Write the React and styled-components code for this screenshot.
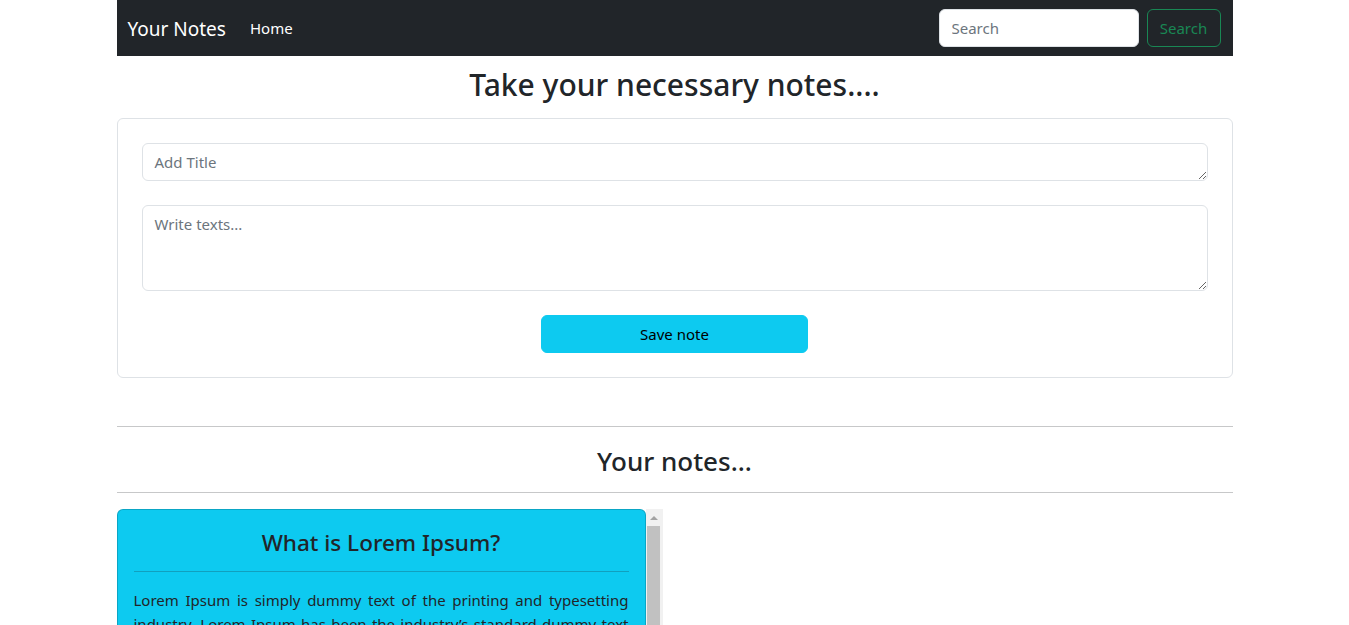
import React from 'react';
import styled, { createGlobalStyle } from 'styled-components';

const Global = createGlobalStyle`
  *, *::before, *::after { box-sizing: border-box; }
  html, body { margin: 0; padding: 0; overflow: hidden; background: #fff; }
  body {
    font-family: "Noto Sans", "Open Sans", sans-serif;
    font-size: 15px;
    line-height: 24px;
    color: #212529;
  }
`;

const Container = styled.div`
  width: 1116px;
  margin: 0 auto;
`;

const Navbar = styled.nav`
  height: 56px;
  background: #212529;
  display: flex;
  align-items: center;
  padding: 0 12px 0 11px;
`;

const Brand = styled.a`
  font-size: 19px;
  line-height: 30px;
  margin-top: 2px;
  color: #fff;
  text-decoration: none;
  margin-right: 24px;
`;

const NavLink = styled.a`
  font-size: 15px;
  line-height: 24px;
  color: #fff;
  text-decoration: none;
`;

const SearchForm = styled.form`
  margin: 0 0 0 auto;
  display: flex;
  gap: 8px;
`;

const SearchInput = styled.input`
  width: 200px;
  height: 38px;
  padding: 6px 12px;
  border: 1px solid #dee2e6;
  border-radius: 6px;
  font: inherit;
  color: #212529;
  background: #fff;
  &::placeholder { color: #6c757d; }
`;

const OutlineButton = styled.button`
  width: 74px;
  height: 38px;
  padding: 0;
  border: 1px solid #198754;
  border-radius: 6px;
  background: transparent;
  color: #198754;
  font: inherit;
`;

const PageTitle = styled.h2`
  margin: 10px 0 14px;
  font-size: 30px;
  font-weight: 500;
  line-height: 38px;
  text-align: center;
`;

const FormCard = styled.div`
  border: 1px solid #dee2e6;
  border-radius: 6px;
  padding: 24px;
  display: flex;
  flex-direction: column;
  gap: 24px;
`;

const Field = styled.textarea`
  display: block;
  width: 100%;
  height: ${p => p.$h}px;
  padding: 6px 12px;
  border: 1px solid #dee2e6;
  border-radius: 6px;
  font: inherit;
  color: #212529;
  &::placeholder { color: #6c757d; }
`;

const SaveButton = styled.button`
  align-self: center;
  width: 25%;
  height: 38px;
  background: #0dcaf0;
  border: 1px solid #0dcaf0;
  border-radius: 6px;
  color: #000;
  font: inherit;
`;

const Rule = styled.hr`
  margin: ${p => p.$m};
  border: 0;
  border-top: 1px solid rgba(33, 37, 41, 0.25);
`;

const SectionTitle = styled.h3`
  margin: 0;
  font-size: 26px;
  font-weight: 500;
  line-height: 32px;
  padding-bottom: 2px;
  text-align: center;
`;

const NotesGrid = styled.div`
  display: grid;
  grid-template-columns: 546px 546px;
  column-gap: 24px;
`;

const NoteColumn = styled.div`
  height: 340px;
  display: flex;
  align-items: flex-start;
  overflow: hidden;
`;

const NoteCard = styled.div`
  flex: 1;
  background: #0dcaf0;
  border: 1px solid rgba(0, 0, 0, 0.175);
  border-radius: 6px;
  padding: 16px;
`;

const ScrollTrack = styled.div`
  flex: 0 0 17px;
  align-self: stretch;
  background: #f1f1f1;
  display: flex;
  flex-direction: column;
`;

const ScrollArrow = styled.div`
  height: 17px;
  display: flex;
  align-items: center;
  justify-content: center;
  &::before {
    content: "";
    width: 0;
    height: 0;
    border-left: 4px solid transparent;
    border-right: 4px solid transparent;
    border-bottom: 4px solid #a3a3a3;
    margin-right: 1px;
  }
`;

const ScrollThumb = styled.div`
  height: ${p => p.$h}px;
  margin: 0 3px 0 1px;
  background: #c1c1c1;
`;

const NoteTitle = styled.h4`
  margin: 0 0 12px;
  font-size: 22.5px;
  font-weight: 500;
  line-height: 33px;
  text-align: center;
`;

const NoteText = styled.p`
  margin: 0;
  text-align: justify;
`;

const notes = [
  {
    title: 'What is Lorem Ipsum?',
    text: 'Lorem Ipsum is simply dummy text of the printing and typesetting industry. Lorem Ipsum has been the industry’s standard dummy text ever since the 1500s, when an unknown printer took a galley of type and scrambled it to make a type specimen book. It has survived not only five centuries, but also the leap into electronic typesetting, remaining essentially unchanged. It was popularised in the 1960s with the release of Letraset sheets containing Lorem Ipsum passages, and more recently with desktop publishing software like Aldus PageMaker including versions of Lorem Ipsum.',
  },
];

export default function App() {
  return (
    <>
      <Global />
      <Container>
        <Navbar>
          <Brand href="#">Your Notes</Brand>
          <NavLink href="#">Home</NavLink>
          <SearchForm onSubmit={e => e.preventDefault()}>
            <SearchInput type="search" placeholder="Search" />
            <OutlineButton type="submit">Search</OutlineButton>
          </SearchForm>
        </Navbar>

        <PageTitle>Take your necessary notes....</PageTitle>

        <FormCard>
          <Field $h={38} rows={1} placeholder="Add Title" />
          <Field $h={86} rows={3} placeholder="Write texts..." />
          <SaveButton type="button">Save note</SaveButton>
        </FormCard>

        <Rule $m="48px 0 18px" />
        <SectionTitle>Your notes...</SectionTitle>
        <Rule $m="13px 0 16px" />

        <NotesGrid>
          {notes.map(n => (
            <NoteColumn key={n.title}>
              <NoteCard>
                <NoteTitle>{n.title}</NoteTitle>
                <Rule $m="0 0 16px" />
                <NoteText>{n.text}</NoteText>
              </NoteCard>
              <ScrollTrack aria-hidden="true">
                <ScrollArrow />
                <ScrollThumb $h={260} />
              </ScrollTrack>
            </NoteColumn>
          ))}
        </NotesGrid>
      </Container>
    </>
  );
}
